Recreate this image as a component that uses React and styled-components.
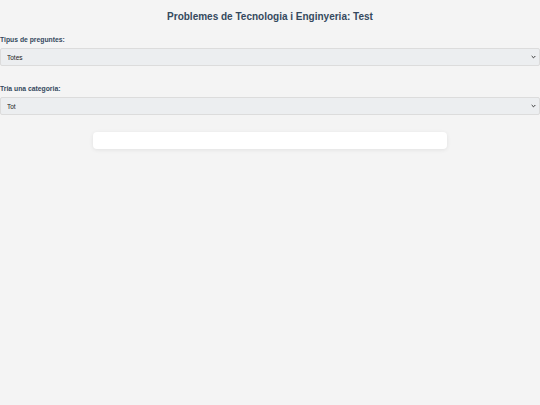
import React from "react";
import styled, { createGlobalStyle } from "styled-components";

const GlobalStyle = createGlobalStyle`
  html, body {
    margin: 0;
    padding: 0;
    background: #f4f4f4;
    font-family: "Liberation Sans", Arial, sans-serif;
    color: #2c3e50;
  }
`;

const chevron =
  "data:image/svg+xml;utf8,<svg xmlns='http://www.w3.org/2000/svg' width='6' height='4' viewBox='0 0 6 4'><path d='M0.8 0.8 L3 3 L5.2 0.8' fill='none' stroke='%23333' stroke-width='1.2'/></svg>";

const Page = styled.div`
  min-height: 405px;
  background: #f4f4f4;
  padding-top: 11px;
`;

const Title = styled.h1`
  margin: 0 0 14px;
  text-align: center;
  font-size: 10px;
  font-weight: bold;
  color: #34495e;
`;

const Field = styled.div`
  display: flex;
  flex-direction: column;
  margin-bottom: ${(p) => (p.$last ? "17px" : "19px")};
`;

const Label = styled.label`
  font-size: 6.8px;
  font-weight: bold;
  color: #34495e;
  margin-bottom: 5px;
`;

const Select = styled.select`
  appearance: none;
  width: 100%;
  height: 18px;
  font-family: "Liberation Sans", Arial, sans-serif;
  font-size: 6.5px;
  color: #222;
  padding: 0 6px;
  background: #eceef0 url("${chevron}") no-repeat right 3px center;
  background-size: 5px 4px;
  border: 1px solid #dcdcdc;
  border-radius: 2px;
`;

const Card = styled.div`
  width: 354px;
  height: 17px;
  margin: 0 auto;
  background: #fff;
  border-radius: 4px;
  box-shadow: 0 1px 4px rgba(0, 0, 0, 0.08);
`;

export default function App() {
  return (
    <Page>
      <GlobalStyle />
      <Title>Problemes de Tecnologia i Enginyeria: Test</Title>
      <Field>
        <Label>Tipus de preguntes:</Label>
        <Select defaultValue="totes">
          <option value="totes">Totes</option>
        </Select>
      </Field>
      <Field $last>
        <Label>Tria una categoria:</Label>
        <Select defaultValue="tot">
          <option value="tot">Tot</option>
        </Select>
      </Field>
      <Card />
    </Page>
  );
}
